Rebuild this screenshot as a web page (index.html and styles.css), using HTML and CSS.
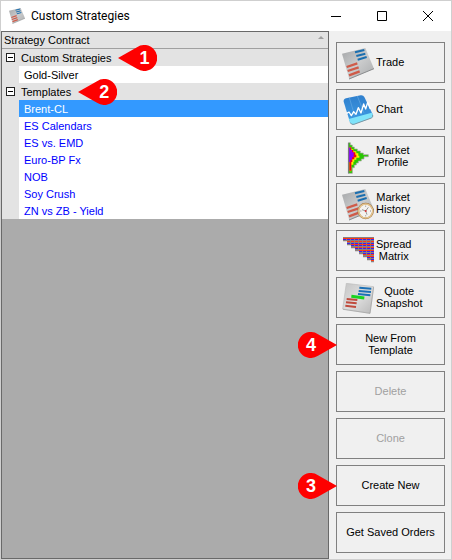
FILE: index.html
```html
<!DOCTYPE html>
<html lang="en">
<head>
    <meta charset="UTF-8">
    <meta name="viewport" content="width=device-width, initial-scale=1.0">
    <title>Custom Strategies</title>
    <link rel="stylesheet" href="styles.css">
</head>
<body>
    <!-- shared shapes -->
    <svg class="defs" width="0" height="0" aria-hidden="true">
        <defs>
            <linearGradient id="paper" x1="0" y1="0" x2="1" y2="1">
                <stop offset="0" stop-color="#a3a5a7"/>
                <stop offset="0.5" stop-color="#cbcccd"/>
                <stop offset="1" stop-color="#a9abad"/>
            </linearGradient>
            <linearGradient id="paper-light" x1="0" y1="0" x2="1" y2="1">
                <stop offset="0" stop-color="#c4c4c4"/>
                <stop offset="0.5" stop-color="#dedede"/>
                <stop offset="1" stop-color="#b8b8b8"/>
            </linearGradient>
            <linearGradient id="sky" x1="0" y1="0" x2="0" y2="1">
                <stop offset="0" stop-color="#2f7fcd"/>
                <stop offset="1" stop-color="#3f9ee6"/>
            </linearGradient>
            <symbol id="ticket" viewBox="0 0 96 96">
                <path d="M0 17L70 0L96 62L22 94Z" fill="url(#paper)"/>
                <path d="M21 93L96 62" stroke="#8b8d8f" stroke-width="3"/>
                <path d="M39 13L67 6M43 24L70 17M47 35L74 27" stroke="#1b6fb0" stroke-width="6"/>
                <path d="M14 57L46 46M17 69L50 58M21 82L53 70" stroke="#cf5b49" stroke-width="7"/>
            </symbol>
            <symbol id="pin" viewBox="0 0 39 26">
                <path d="M39 13L20 2.2A13 13 0 1 0 20 23.8Z" fill="#fe0000"/>
            </symbol>
        </defs>
    </svg>

    <div class="window">
        <header class="titlebar">
            <svg class="app-icon"><use href="#ticket"/></svg>
            <h1>Custom Strategies</h1>
            <div class="window-controls">
                <button type="button" aria-label="Minimize"><svg viewBox="0 0 10 10"><path d="M0 5.5H10"/></svg></button>
                <button type="button" aria-label="Maximize"><svg viewBox="0 0 10 10"><path d="M.5 .5H9.5V9.5H.5Z"/></svg></button>
                <button type="button" aria-label="Close"><svg viewBox="0 0 10 10"><path d="M0 0L10 10M10 0L0 10"/></svg></button>
            </div>
        </header>

        <div class="content">
            <main class="list-panel">
                <table class="strategies">
                    <thead>
                        <tr>
                            <th colspan="2" scope="col">
                                <div class="column-title">Strategy Contract<svg class="sort" viewBox="0 0 6 3"><path d="M0 3L3 0L6 3Z"/></svg></div>
                            </th>
                        </tr>
                    </thead>
                    <tbody>
                        <tr class="group">
                            <td class="gutter"><button type="button" class="toggle" aria-label="Collapse Custom Strategies"></button></td>
                            <th scope="rowgroup"><span class="group-name">Custom Strategies<span class="pin pin-left"><svg><use href="#pin"/></svg><b>1</b></span></span></th>
                        </tr>
                        <tr class="custom"><td class="gutter"></td><td>Gold-Silver</td></tr>
                    </tbody>
                    <tbody>
                        <tr class="group">
                            <td class="gutter"><button type="button" class="toggle" aria-label="Collapse Templates"></button></td>
                            <th scope="rowgroup"><span class="group-name">Templates<span class="pin pin-left"><svg><use href="#pin"/></svg><b>2</b></span></span></th>
                        </tr>
                        <tr class="selected"><td class="gutter"></td><td>Brent-CL</td></tr>
                        <tr><td class="gutter"></td><td>ES Calendars</td></tr>
                        <tr><td class="gutter"></td><td>ES vs. EMD</td></tr>
                        <tr><td class="gutter"></td><td>Euro-BP Fx</td></tr>
                        <tr><td class="gutter"></td><td>NOB</td></tr>
                        <tr><td class="gutter"></td><td>Soy Crush</td></tr>
                        <tr><td class="gutter"></td><td>ZN vs ZB - Yield</td></tr>
                    </tbody>
                </table>
            </main>

            <aside class="actions">
                <button type="button" class="action with-icon">
                    <svg class="icon"><use href="#ticket"/></svg>
                    <span>Trade</span>
                </button>
                <button type="button" class="action with-icon">
                    <svg class="icon" viewBox="0 0 96 96">
                        <path d="M12 10L56 1Q64 0 67 6L92 58Q95 66 88 69L36 88Q27 90 24 82L5 20Q4 12 12 10Z" fill="url(#sky)"/>
                        <path d="M20 72L89 53L92 58Q95 66 88 69L36 88Q27 90 24 82Z" fill="#7fe3fa"/>
                        <path d="M25 83Q28 90 36 88L88 69Q94 66 92 60" fill="none" stroke="#7d98a4" stroke-width="3"/>
                        <path d="M22 8L38 62M46 3L66 54" stroke="#64a9e3" stroke-width="2"/>
                        <path d="M14 55L21 51L28 62L35 50L42 58L49 38L57 54L65 27L71 42L77 22L85 42" fill="none" stroke="#fff" stroke-width="4" stroke-linejoin="round"/>
                    </svg>
                    <span>Chart</span>
                </button>
                <button type="button" class="action with-icon">
                    <svg class="icon" viewBox="0 0 96 96">
                        <path d="M19 2H25V9H31V15H37V21H46V27H55V33H64V38H79V44H66V51H58V57H49V63H43V69H37V77H31V94H19Z" fill="#28c800" stroke="#a6a0a0" stroke-width="2"/>
                        <path d="M22 16H28V22H34V28H43V34H49V41H52V47H43V53H37V59H34V68H28V88H22Z" fill="#ffed00"/>
                        <path d="M22 16H28V24H34V31H40V38H43V46H37V52H31V60H28V86H22Z" fill="#f00018"/>
                        <path d="M20 17H25V24H30V31H35V46H30V53H25V60H20Z" fill="#8d00ff"/>
                        <path d="M20 3V94" stroke="#777" stroke-width="3"/>
                    </svg>
                    <span>Market<br>Profile</span>
                </button>
                <button type="button" class="action with-icon">
                    <svg class="icon" viewBox="0 0 96 96">
                        <use href="#ticket"/>
                        <circle cx="71" cy="66" r="22" fill="#f4f2ef" stroke="#9a7042" stroke-width="5"/>
                        <circle cx="71" cy="66" r="21" fill="none" stroke="#e5c58e" stroke-width="4"/>
                        <path d="M71 50V53M71 79V82M55 66H58M84 66H87" stroke="#888" stroke-width="3"/>
                        <path d="M60 62L71 66L79 55M71 66L75 77" fill="none" stroke="#666" stroke-width="2"/>
                        <circle cx="71" cy="66" r="3" fill="#d33"/>
                    </svg>
                    <span>Market<br>History</span>
                </button>
                <button type="button" class="action with-icon">
                    <svg class="icon" viewBox="0 0 96 96">
                        <path d="M3 3H96V79H87V73H75V64H63V55H51V46H39V37H27V28H15V16H3Z" fill="#8a8080"/>
                        <path d="M3 7.5H96M27 25.5H96M51 43.5H96M75 61.5H96" stroke="#ff3a12" stroke-width="3"/>
                        <path d="M3 10.500H96M15 22.500H96M39 37.500H96M63 52.500H96M87 70.500H96" stroke="#3b20ef" stroke-width="3" stroke-dasharray="9 3"/>
                        <path d="M15 16.500H96M39 34.500H96M63 55.500H96M87 73.500H96" stroke="#ff3a12" stroke-width="3" stroke-dasharray="9 3"/>
                        <path d="M27 28.500H96M51 46.500H96M75 64.500H96" stroke="#3b20ef" stroke-width="3" stroke-dasharray="9 3"/>
                    </svg>
                    <span>Spread<br>Matrix</span>
                </button>
                <button type="button" class="action with-icon">
                    <svg class="icon" viewBox="0 0 96 96">
                        <path d="M13 1L95 11L84 91L2 78Z" fill="url(#paper-light)" stroke="#bcbcbc" stroke-width="2"/>
                        <path d="M3 79L84 91L95 12" fill="none" stroke="#a0a0a0" stroke-width="2"/>
                        <path d="M52 14L88 17M50 24L87 27M48 33L85 37" stroke="#1c70b5" stroke-width="6"/>
                        <path d="M28 40L67 45" stroke="#18d321" stroke-width="9"/>
                        <path d="M14 48L46 51M12 58L44 61M10 68L42 72" stroke="#c04b3d" stroke-width="6"/>
                    </svg>
                    <span>Quote<br>Snapshot</span>
                </button>
                <button type="button" class="action">
                    <span>New From<br>Template</span>
                    <span class="pin pin-right"><svg><use href="#pin"/></svg><b>4</b></span>
                </button>
                <button type="button" class="action" disabled>Delete</button>
                <button type="button" class="action" disabled>Clone</button>
                <button type="button" class="action">
                    <span>Create New</span>
                    <span class="pin pin-right"><svg><use href="#pin"/></svg><b>3</b></span>
                </button>
                <button type="button" class="action">Get Saved Orders</button>
            </aside>
        </div>
    </div>
</body>
</html>
```
FILE: styles.css
```css
:root {
    --window-border: #cfcfcf;
    --panel-border: #696969;
    --face: #f0f0f0;
    --grid-bg: #ababab;
    --group-bg: #e3e3e3;
    --selection: #3399ff;
    --link-blue: #0000ff;
    --row-height: 17px;
}

* {
    margin: 0;
    padding: 0;
    box-sizing: border-box;
}

body {
    font-family: "Liberation Sans", Arial, sans-serif;
    font-size: 11px;
    color: #000;
}

.defs {
    position: absolute;
}

.window {
    display: flex;
    flex-direction: column;
    min-height: 100vh;
    border: 1px solid var(--window-border);
    background: var(--face);
}

/* title bar */
.titlebar {
    display: flex;
    align-items: center;
    height: 30px;
    padding-left: 8px;
    background: #fff;
}

.app-icon {
    width: 16px;
    height: 16px;
}

.titlebar h1 {
    flex: 1;
    margin-left: 6px;
    font-family: Roboto, "Segoe UI", sans-serif;
    font-size: 12px;
    font-weight: 400;
}

.window-controls {
    display: flex;
}

.window-controls button {
    display: flex;
    align-items: center;
    justify-content: center;
    width: 46px;
    height: 28px;
    border: none;
    background: none;
}

.window-controls svg {
    width: 10px;
    height: 10px;
    fill: none;
    stroke: #000;
}

/* strategy list */
.content {
    flex: 1;
    display: flex;
}

.list-panel {
    flex: 1;
    border: 1px solid var(--panel-border);
    background: var(--grid-bg);
}

.strategies {
    width: 100%;
    border-collapse: collapse;
    text-align: left;
}

.strategies tr {
    height: var(--row-height);
}

.strategies th,
.strategies td {
    padding: 0;
    font-weight: 400;
    line-height: 16px;
}

.strategies td {
    padding-left: 5px;
    background: #fff;
    color: var(--link-blue);
}

.strategies thead th,
.strategies .group th,
.strategies .gutter {
    background: var(--group-bg);
}

.column-title {
    display: flex;
    align-items: center;
    justify-content: space-between;
    height: var(--row-height);
    padding: 0 4px 0 2px;
    border-bottom: 1px solid #a0a0a0;
}

.sort {
    width: 6px;
    height: 3px;
    margin-bottom: 5px;
    fill: #a0a0a0;
}

.strategies .gutter {
    width: 17px;
    padding: 0 0 0 4px;
}

.strategies .group th {
    padding-left: 2px;
}

.strategies .custom td {
    color: #000;
}

.strategies .selected td:last-child {
    background: var(--selection);
    color: #fff;
}

.toggle {
    display: flex;
    align-items: center;
    justify-content: center;
    width: 9px;
    height: 9px;
    border: 1px solid #222;
    background: #fff;
}

.toggle::before {
    content: "";
    width: 5px;
    height: 1px;
    background: #000;
}

.group-name {
    position: relative;
}

/* side buttons */
.actions {
    display: flex;
    flex-direction: column;
    gap: 6px;
    width: 122px;
    padding: 11px 6px 6px 7px;
}

.action {
    position: relative;
    display: flex;
    align-items: center;
    justify-content: center;
    height: 41px;
    padding-bottom: 1px;
    border: 1px solid #808080;
    background: var(--face);
    color: #000;
    font: inherit;
    line-height: 12px;
}

.action:disabled {
    color: #a0a0a0;
}

.with-icon {
    justify-content: flex-start;
    gap: 2px;
    padding-left: 5px;
}

.icon {
    width: 32px;
    height: 32px;
    margin-top: 4px;
}

/* numbered callouts */
.pin {
    position: absolute;
    top: 50%;
    z-index: 1;
    width: 39px;
    height: 26px;
    margin-top: -13px;
    color: #fff;
    font-size: 18px;
    line-height: 26px;
    text-align: center;
}

.pin svg {
    display: block;
    width: 39px;
    height: 26px;
}

.pin b {
    position: absolute;
    top: 0;
    width: 26px;
}

.pin-left {
    left: 100%;
    margin-left: 7px;
}

.pin-left svg {
    transform: scaleX(-1);
}

.pin-left b {
    right: 0;
}

.pin-right {
    right: 100%;
}

.pin-right b {
    left: 0;
}
```
